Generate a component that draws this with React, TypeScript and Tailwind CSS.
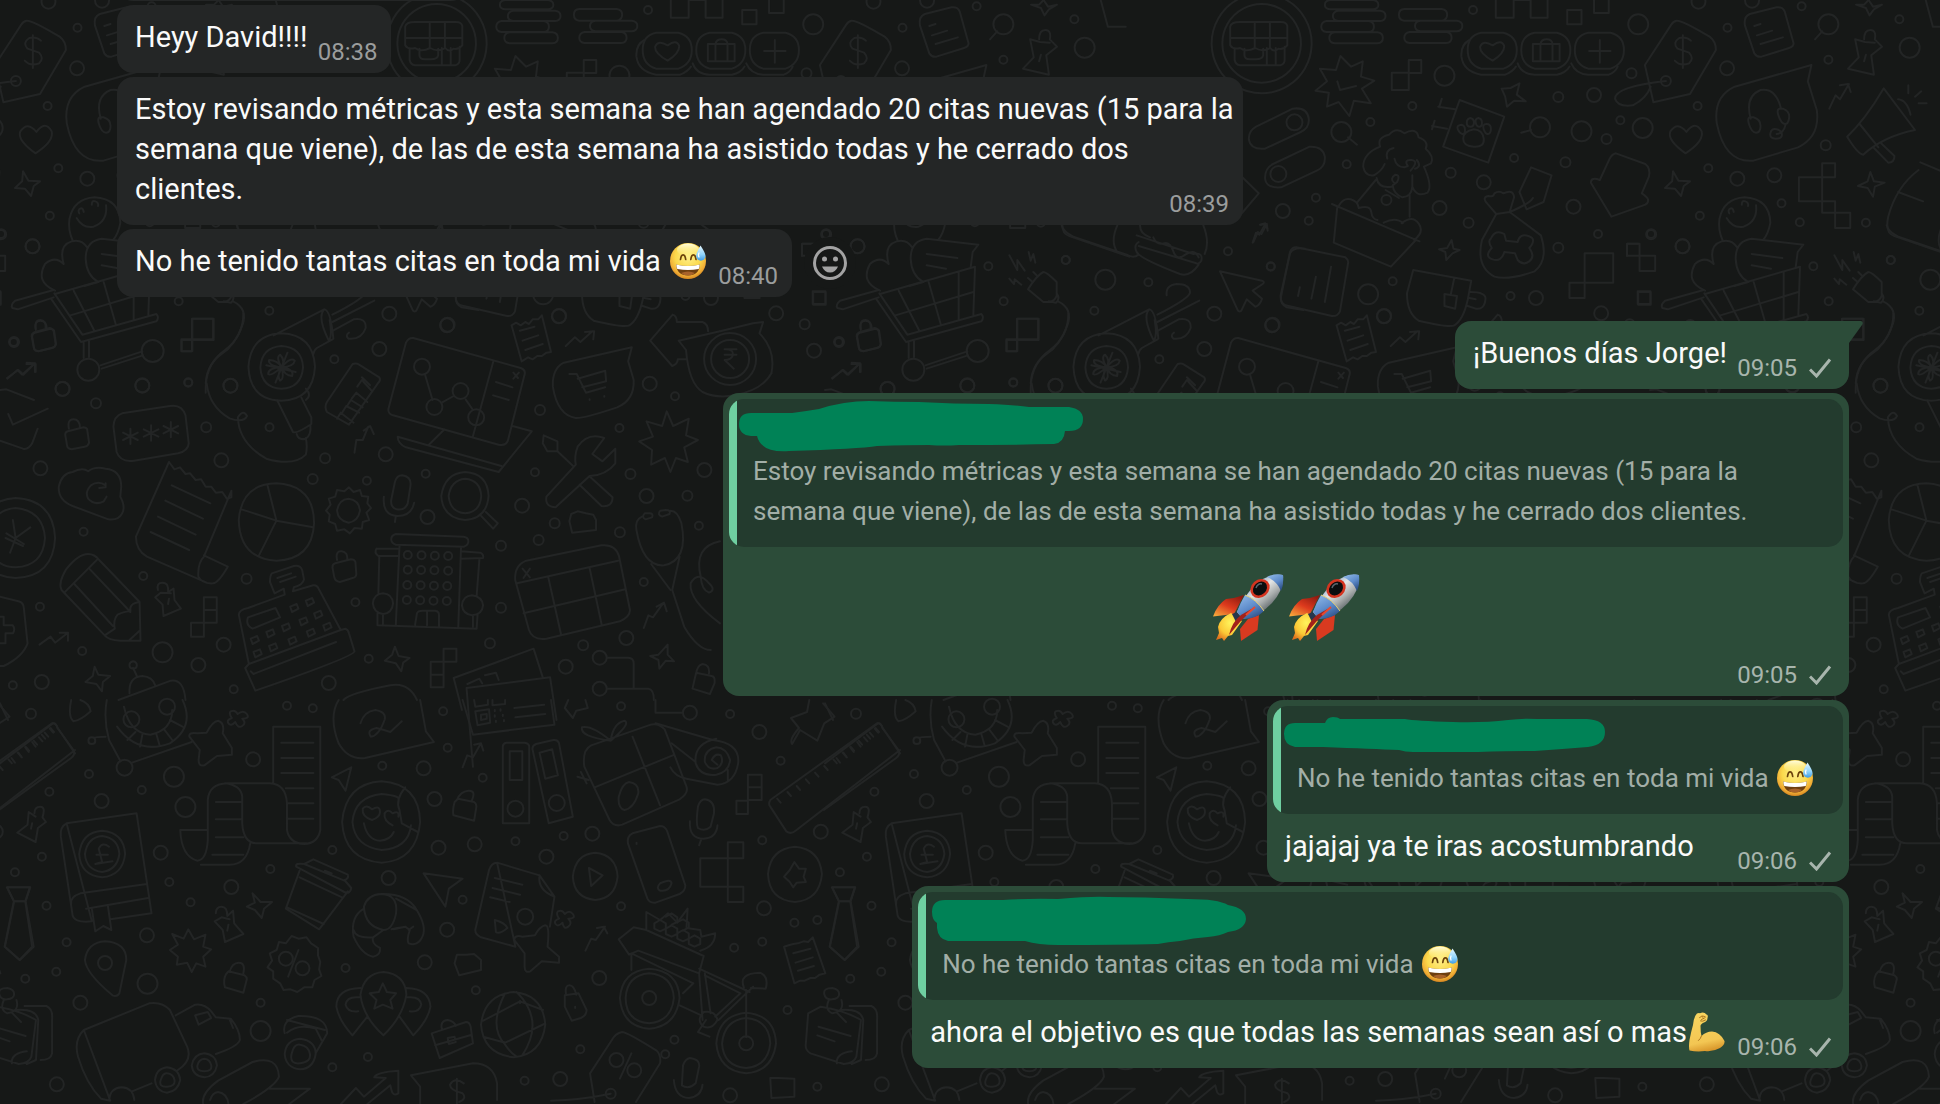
import React from "react";
import clsx from "clsx";

type Dot = [x: number, y: number, size: number];

interface Sheet {
  x: number;
  y: number;
  sx: number;
  sy: number;
  dots: Dot[];
  paths: string[];
}

const TILE_WIDTH = 825;

// The wallpaper tile is drawn in four sheets, each with its own origin and scale.
const SHEETS: Sheet[] = [
  {
    x: 415,
    y: 0,
    sx: 700 / 1568,
    sy: 1 / 3,
    dots: [
      [522, 30, 4], [892, 73, 10], [1092, 83, 4], [1258, 19, 4], [1477, 58, 4], [1500, 143, 10],
      [458, 227, 10], [386, 318, 4], [292, 366, 4], [227, 396, 10], [239, 493, 4], [170, 593, 4],
      [96, 633, 7], [154, 662, 4], [69, 800, 4], [342, 844, 4], [287, 883, 10], [323, 948, 7],
      [73, 974, 7], [472, 518, 5], [546, 547, 7], [614, 474, 4], [729, 487, 5], [447, 624, 7],
      [512, 668, 5], [713, 291, 5], [793, 285, 7], [877, 220, 5], [1091, 205, 7], [1025, 318, 4],
      [672, 382, 10], [765, 394, 10], [821, 417, 5], [852, 361, 4], [902, 384, 10], [1049, 505, 4],
      [1114, 536, 7], [1197, 526, 7], [1213, 610, 4], [1254, 667, 4], [1402, 668, 4], [1030, 647, 4],
      [747, 620, 7], [802, 702, 4], [921, 703, 5], [713, 743, 5], [991, 739, 7], [606, 888, 4],
      [663, 894, 7], [809, 940, 7], [1318, 179, 4], [1318, 73, 10], [1312, 436, 5], [328, 600, 5],
      [122, 367, 8], [86, 522, 8], [954, 243, 5], [1458, 780, 4], [1027, 5, 7], [1147, 2, 7],
    ],
    paths: [
      "M48 -20a112 150 0 1 0 1 0zM48 12a88 118 0 1 0 1 0z",
      "M0 66H92q12 0 14 12v58q-10 14 -20 10q-10 12 -18 -2q-16 14 -34 0q-20 14 -34 0q-16 6 -22 -8V80q2 -14 22 -14zM-22 114H106M33 66V144M67 66V144M-12 146V180q2 14 12 16H90q10 -4 10 -16V140M60 144V194M80 144V194M10 146v20q0 12 12 12h14q14 0 16 -12v-20",
      "M202 0H298q12 2 12 14t-12 14H202q-12 -2 -12 -14t12 -14zM220 32H314q12 2 12 16t-12 15H220q-12 -2 -12 -15t12 -16zM194 63H288q12 2 12 17t-12 16H194q-12 -2 -12 -16t12 -17zM212 97H308q12 2 12 17t-12 16H212q-12 -2 -12 -16t12 -17z",
      "M368 27H452q12 2 12 17t-12 18H368q-12 -2 -12 -18t12 -17zM404 62H486q12 2 12 16t-12 16H404q-12 -2 -12 -16t12 -16zM380 96H462q12 2 12 17t-12 16H380q-12 -2 -12 -16t12 -17z",
      "M573 -8H613V53H573zM651 -8H689V53H651zM613 0H651M733 30H765V73H733zM793 -8H826V39H793z",
      "M540 98H590Q620 108 620 150T590 206H540Q510 194 510 150T540 98zM660 98H710Q740 108 740 150T710 206H660Q630 194 630 150T660 98zM780 98H830Q860 108 860 150T830 206H780Q750 194 750 150T780 98z",
      "M514 120Q494 134 496 170Q500 214 540 224H594Q610 216 618 200M622 190Q630 222 660 224H710Q730 218 738 200M742 190Q752 222 780 224H826Q840 218 846 200",
      "M566 182Q536 160 538 140Q544 118 566 136Q586 116 592 138Q592 160 566 182zM656 132H716V184H656zM673 132V184M700 132V184M673 132q2 -14 14 -14t13 14M806 120V188M782 153H830",
      "M225 168l24 32 26 -16 -4 46 30 12 -28 24 20 44 -38 -8 -10 46 -24 -42 -26 14 4 -42 -30 -6 26 -28 -16 -38 36 4zM218 244l6 26 36 -12",
      "M340 218H378V270H340zM378 180H406V219H378z",
      "M978 62Q990 60 1052 110Q1066 124 1066 150L1008 282L926 307L907 195L966 74Q970 64 978 62zM1010 122Q1000 108 984 114Q968 128 980 146L1006 158Q1018 176 1006 190Q986 200 974 182M992 106V204M954 243Q840 260 840 296Q846 322 880 316Q910 296 920 260",
      "M1142 42L1202 22Q1216 20 1220 34L1240 130Q1240 140 1230 144L1168 170Q1158 172 1152 160L1131 76Q1128 50 1142 42zM1152 78l14 -6M1158 106l34 -14M1166 132l50 -20",
      "M1304 94l-16 24M652 390l-22 8M242 412l20 22",
      "M1408 0l10 20 20 -6 -18 14 -10 18 -8 -22 -22 -10 18 0zM1398 118Q1398 90 1412 90T1422 118L1438 140L1414 166L1420 224L1362 206L1386 172L1378 118L1400 126L1422 128M1402 164l-4 20",
      "M1280 195L1108 260Q1060 290 1068 370Q1086 490 1150 482L1250 442Q1300 410 1292 330L1272 244zM1144 356Q1130 290 1166 270Q1200 262 1212 326M1150 352q16 6 16 26t-10 20t-16 -26t10 -20zM1216 326q16 8 14 28t-10 18t-14 -26t10 -20zM1222 374q-4 26 -20 28M1202 388q12 4 12 16t-14 12t-12 -16t14 -12z",
      "M1320 326l14 -40 10 12 20 -46M1344 256l18 -4 6 24M30 726l10 -30 8 6 12 -30M46 674l14 -2 2 20",
      "M1442 265L1512 390Q1440 410 1396 464Q1384 462 1360 410Q1400 360 1442 265zM1388 372l42 70M1420 444l32 44q14 0 14 -20l-30 -38M1474 298q20 2 28 46M1497 256v24M1526 274l-14 16M1520 310h18",
      "M492 300L592 350L556 488L455 440zM444 320L482 328M430 378L464 386M452 296L446 322M436 362L430 388",
      "M524 388Q544 390 546 416T524 440T500 416T524 388zM516 354q8 2 8 14t-8 12t-8 -12t8 -14zM534 354q8 2 8 14t-6 12t-8 -12t6 -14zM496 374q8 2 8 16t-6 12t-10 -14t8 -14zM552 372q10 0 10 14t-6 16t-10 -14t6 -16z",
      "M626 250l-6 34 20 20 -26 -2 -16 18 -4 -30 -8 -24 20 -2zM970 514l12 28 26 2 -14 14 -6 30 -14 -22 -22 -2 16 -20zM1412 516l8 28 24 4 -22 12 -4 30 -12 -26 -22 -6 22 -14zM474 720l4 26 14 4 -16 10 -14 20 -2 -24 -14 -8 18 -4z",
      "M36 380L118 326Q150 320 154 356Q156 384 136 396L56 446Q24 450 20 420Q18 394 36 380zM74 492L156 440Q186 438 190 470Q192 500 172 512L92 562Q58 566 56 534Q56 504 74 492z",
      "M314 440Q306 412 334 404Q350 380 368 400Q396 380 400 412Q424 424 416 446Q436 470 428 490L412 500Q432 560 420 578Q396 594 386 560V526M386 560Q384 590 364 592Q344 582 342 556L352 546Q360 524 348 524Q334 536 346 550M340 560Q310 566 306 534M314 440Q276 460 276 500Q280 530 300 526Q318 512 324 492M344 444Q324 450 330 476M346 476q4 26 22 26l8 -4q-10 -20 8 -18t-2 32M396 480q12 20 -4 26M304 540L262 608M380 584V650M326 570l30 24",
      "M206 612L402 724M218 620L210 728L338 800L394 720M222 616q10 -24 26 -18t18 26q26 -10 28 12t14 24M322 668q20 -14 34 -6t6 8q24 -26 38 0t-10 50",
      "M126 742L236 772Q244 780 242 790L224 934Q218 950 206 948L102 916Q90 908 92 890L112 756Q116 742 126 742zM204 800L190 906M170 830L160 896M134 862L130 888M-5 518L42 580L-5 654",
      "M388 810L518 842L510 900Q500 960 480 976Q470 984 400 962Q374 940 374 880zM480 834L472 884M458 882L486 888L482 926L458 918zM516 876Q550 876 550 896Q548 930 528 926L510 918M514 894l14 4",
      "M556 614Q540 592 556 588Q568 592 570 580Q580 570 590 580Q612 566 614 592L604 636L574 642zM574 642L542 720Q528 800 570 830Q600 842 660 814Q692 780 674 706L604 636M604 636Q650 610 656 594M652 502L698 526L680 606L642 628L626 576z",
      "M562 716q10 -30 30 -14l4 20 26 4q4 -26 24 -18t2 36q14 26 0 40t-26 -4l-6 -20 -24 -4q-6 30 -26 22t-2 -34q-10 -20 -2 -28z",
      "M842 460L908 492Q920 504 916 530L900 580Q924 600 908 614L832 650L786 548Q786 530 806 540L828 476Q834 462 842 460zM998 460Q956 420 964 394Q980 362 1000 396Q1020 360 1034 394Q1040 424 998 460z",
      "M772 760H836V848H772zM738 848H772V894H738zM892 876H920V914H892zM867 731H895V767H867zM895 767H930V813H895z",
      "M1252 532H1304V604H1252zM1304 490H1333V532H1304zM1304 604H1333V638H1304zM1304 532V604M1333 638H1367V684H1333z",
      "M1130 592Q1186 596 1188 668Q1184 700 1172 720M1082 724Q1070 690 1074 656Q1084 596 1130 592M1096 640q-4 -10 2 -14t8 10M1124 614q0 -14 8 -10t6 14M1090 654Q1104 686 1128 680Q1160 664 1156 616",
      "M1524 487L1600 530M1520 510Q1470 560 1452 650Q1444 700 1466 708L1600 770M1474 576l56 28M1536 0l16 80h40",
    ],
  },
  {
    x: -45,
    y: 222,
    sx: 1 / 3,
    sy: 1 / 3,
    dots: [
      [138, 36, 4], [233, 73, 7], [74, 307, 5], [102, 386, 7], [177, 360, 5], [323, 500, 7],
      [625, 133, 4], [671, 238, 4], [700, 482, 4], [562, 490, 7], [857, 114, 4], [976, 173, 10],
      [943, 266, 4], [1105, 181, 4], [1344, 88, 4], [1472, 133, 4], [1303, 275, 7], [1273, 381, 7],
      [1138, 412, 4], [1476, 310, 7], [826, 491, 7], [593, 387, 11], [400, 443, 11],
    ],
    paths: [
      "M66 102V65H100M98 208H136V246H98z",
      "M326 126Q310 70 350 58Q380 50 396 76M326 126Q300 100 270 126Q240 180 300 206M595 68L440 50Q392 56 392 110Q394 160 430 180L388 192M595 68L578 90L572 136M440 96l92 12M440 130l58 10",
      "M585 134L300 216M585 134L580 278M536 150V294M446 180L482 306M356 206L418 326M346 280L580 210M296 204L180 236Q166 248 172 258L188 262L296 226M288 230L378 360L604 298Q614 286 604 276L382 338L298 214M386 360V408M402 358V406M436 430L562 388M440 440L564 400",
      "M688 100l24 44v-30l22 32M746 90l6 26 8 -20 6 26M688 170l14 16 2 -14 20 16M760 150l12 12M744 168l14 12",
      "M790 150Q800 150 830 180V222Q822 240 806 240H790L744 202Q770 160 790 150zM830 214Q842 230 828 242L806 238M834 238Q880 260 862 310Q840 370 800 396Q750 430 752 512",
      "M712 290H776V354H712zM680 354H712V388H680z",
      "M242 320Q238 294 256 294T272 320M240 330L284 318Q294 320 296 328L302 366Q302 376 292 378L250 388Q238 388 236 376L230 342Q230 334 240 330zM156 468l34 -24 16 14 34 -34M214 426h28v24",
      "M845 10Q850 30 880 44L1040 98Q1060 110 1076 98M1012 10Q990 60 1012 90M1070 40L1240 96Q1270 90 1264 116Q1256 130 1244 122L1076 72M1076 60Q1060 70 1070 90Q1080 110 1200 156Q1230 166 1256 128M1080 10Q1080 36 1110 46M1270 10Q1290 60 1274 96M1120 46q10 24 30 18t30 24t36 10t40 8",
      "M1320 148L1446 176Q1456 180 1448 186L1418 206L1446 230Q1440 250 1426 254L1400 232L1384 266Q1376 272 1372 262zM1418 62l10 -30 10 6 18 -32M1440 8l16 -4 6 16",
      "M1575 80Q1540 74 1530 94L1502 220Q1500 246 1520 256L1570 264",
      "M1160 220Q1156 190 1190 186Q1230 186 1230 212Q1226 230 1132 278M1258 236L1132 300M1134 326L1196 292Q1234 286 1232 318Q1220 354 1180 350Q1170 340 1182 332",
    ],
  },
  {
    x: 0,
    y: 300,
    sx: 720 / 1568,
    sy: 1 / 3,
    dots: [
      [30, 126, 4], [310, 257, 7], [136, 267, 7], [209, 310, 5], [410, 247, 4], [502, 257, 7],
      [587, 382, 4], [449, 382, 5], [482, 481, 7], [708, 475, 5], [681, 537, 5], [799, 542, 4],
      [840, 463, 7], [927, 521, 4], [1176, 330, 5], [1349, 384, 4], [1415, 251, 7], [1470, 289, 4],
      [1165, 517, 4], [1373, 522, 5], [1534, 510, 7], [1408, 588, 7], [1497, 587, 5], [1137, 617, 7],
      [931, 651, 7], [1208, 670, 5], [1173, 720, 5], [1091, 737, 5], [1350, 697, 5], [1522, 677, 4],
      [88, 505, 7], [182, 695, 4], [312, 828, 4], [87, 920, 4], [179, 1053, 4], [354, 1057, 10],
      [432, 1095, 7], [91, 1146, 7], [28, 1156, 4], [487, 1034, 7], [537, 836, 5], [774, 907, 4],
      [803, 1076, 4], [716, 1149, 7], [509, 1168, 4], [1091, 923, 5], [1067, 1030, 5], [1232, 1100, 7],
      [1270, 1036, 5], [1364, 1014, 7], [1402, 846, 4], [919, 200, 8], [946, 321, 8], [1003, 273, 8],
      [1037, 352, 8], [1217, 49, 7], [1306, 1073, 7], [1306, 1166, 7],
      [888, 765, 4], [918, 766, 4], [947, 767, 4], [976, 768, 4],
      [888, 809, 4], [917, 810, 4], [946, 811, 4], [976, 812, 4],
      [887, 855, 4], [916, 856, 4], [945, 857, 4], [974, 858, 4],
      [886, 900, 4], [915, 901, 4], [944, 902, 4], [973, 903, 4],
      [1590, 177, 26], [1590, 177, 19],
    ],
    paths: [
      "M450 250Q456 320 500 355Q530 370 538 348Q530 326 518 352Q520 430 580 476Q640 500 666 464Q670 440 666 414M530 40Q530 110 490 150Q450 190 448 250",
      "M596 106L706 28Q720 30 726 116M706 28Q690 50 716 122Q724 110 718 60M724 118L690 144Q684 150 682 164M613 100Q682 104 686 200Q682 300 613 302Q544 300 541 200Q546 104 613 100zM613 138Q658 142 660 202Q656 264 613 266Q570 264 567 202Q570 142 613 138zM613 202Q600 170 610 164Q622 180 613 202Q632 170 642 182Q640 200 613 202Q642 208 636 228Q620 226 613 202Q620 236 610 242Q602 226 613 202Q590 230 584 222Q584 204 613 202Q582 196 586 180Q604 180 613 202M626 158l-26 90M580 196l64 20",
      "M604 302L638 396Q646 402 678 372V352L656 292M666 266q14 20 0 34M646 402q4 20 20 14q12 -10 10 -42",
      "M768 192Q776 188 782 194L826 232Q830 240 824 248L760 374L712 336Q706 320 712 306zM734 356l8 -18 28 30M746 336l8 -18 28 20M756 318l8 -18 26 22M766 296l10 -18 24 28M778 260l10 -20 20 30M788 232l18 24",
      "M900 114L1134 204Q1146 210 1142 226L1106 422Q1102 438 1086 434L856 346Q844 340 846 326L884 128Q890 112 900 114zM1074 186L1030 408M926 226L942 300M962 308L988 288M1014 298L1030 330M1080 246l36 16M1074 286l34 14M1118 218l10 16M1130 218l-12 18M968 388L934 434M1116 378L1158 394L1086 516L884 442Q866 430 866 410L1092 498",
      "M1114 76l10 -8 10 8 10 -10 8 6 8 -14 12 0 8 -12L1200 156l-10 2 -10 10 -10 0 -10 10 -10 -6 -14 12zM1132 92l32 -12M1138 122l34 -16M1144 150l38 -18M1232 138l20 -26 12 14 26 -32M1274 96l20 -2 -2 24M16 236l22 -26 10 14 28 -34M58 188l18 2 0 26M86 1034l24 -24 10 18 28 -30M130 998l18 0 0 24M772 458l4 -38 14 0 12 -40M792 392l14 -14 8 24M1402 984l10 -38 10 6 22 -42M1430 920l16 -12 6 26",
      "M1376 142L1228 188Q1202 206 1204 260Q1214 346 1254 354Q1270 356 1344 322Q1382 300 1380 240L1368 184zM1240 222h16L1276 278L1318 262M1258 236L1318 212L1320 244L1268 262M1284 298v2M1316 288v2",
      "M1465 44L1416 122L1464 198Q1476 192 1476 178L1496 178M1465 44Q1474 48 1474 66L1530 66Q1542 72 1542 94M1568 94L1478 122L1494 150Q1500 250 1530 276Q1560 296 1600 286Q1660 270 1680 220",
      "M1568 94L1640 70L1662 66L1654 100Q1690 150 1680 220M1578 148H1604M1578 164H1604M1580 148Q1598 148 1596 166Q1592 180 1578 180L1598 206",
      "M1452 334l14 44 34 -22 -6 50 26 14 -30 22 8 44 -26 -12 -12 42 -12 -42 -30 20 2 -44 -28 -26 30 -14 -14 -46 34 14z",
      "M266 340L370 318Q396 312 404 346L411 430Q410 452 388 460L292 482Q262 488 254 456L247 380Q248 348 266 340zM284 386v46M268 398l32 22M300 398l-32 22M329 376v46M313 388l32 22M345 388l-32 22M372 366v46M356 378l32 22M388 378l-32 22",
      "M78 90Q74 62 88 62T102 88M76 98L110 86Q118 88 118 94L122 132Q120 142 112 144L84 154Q74 152 74 142L70 110Q70 100 76 98zM150 386Q146 358 160 358T174 384M148 394L182 382Q190 384 190 390L194 428Q192 438 184 440L156 448Q146 446 146 436L142 404Q142 396 148 394zM734 780Q730 752 744 754T756 780M730 790L764 778Q772 778 774 786L776 822Q776 832 768 834L740 846Q730 844 728 832L724 802Q724 792 730 790zM1516 1122Q1518 1096 1530 1092Q1546 1094 1544 1120M1516 1118L1550 1128Q1558 1130 1556 1150L1546 1182L1508 1166z",
      "M158 516Q180 500 192 514Q206 498 230 506Q264 510 264 560L262 590Q274 620 266 640Q258 662 236 658L158 618Q126 600 128 560Q134 520 158 516zM230 556Q214 540 198 556Q184 576 192 596Q206 618 226 604L232 590M216 564l14 -2 0 -12",
      "M368 486l12 22 12 -6 12 20 10 -2 12 20 12 -2 10 22 12 0 10 18 14 -2 10 20 10 -4 0 -20L444 770Q430 790 432 830Q440 852 464 850Q476 848 496 800L444 766M368 486L296 710Q296 750 320 770L450 848M374 556l84 54M360 602l82 54M344 650l82 54M328 696l84 54",
      "M602 550Q684 556 684 670Q680 778 602 782Q522 776 520 660Q526 552 602 550zM583 558L602 662L682 682M602 662L526 628M602 662L564 766",
      "M760 562l10 14 14 -6 4 18 14 2 -2 20 8 14 -10 14 6 22 -14 6 -2 20 -16 -2 -10 16 -12 -12 -16 4 -4 -20 -14 -8 2 -20 -8 -12 10 -18 -4 -18 14 -6 4 -20 16 4zM759 596Q782 600 784 632Q780 664 759 668Q736 662 734 632Q738 598 759 596z",
      "M876 526Q896 530 894 556L888 610Q882 632 864 628Q850 622 852 600L860 546Q864 526 876 526zM836 590Q832 646 866 648Q896 648 902 608M862 648l-2 18M1013 516Q1062 520 1064 588Q1060 656 1013 660Q964 654 961 588Q968 520 1013 516zM1013 536Q1046 540 1048 588Q1046 636 1013 640Q980 636 977 588Q982 540 1013 536zM1058 636L1084 670L1074 686L1048 648",
      "M34 594Q116 600 120 714Q116 830 34 834Q-40 830 -50 714Q-40 600 34 594zM34 624Q94 632 98 714Q94 798 34 802Q-20 800 -28 714Q-20 630 34 624zM28 660L34 714L66 682M34 714L22 758M14 700L52 732M12 714L50 738",
      "M0 270L14 268L74 300M104 326L28 374L18 342M82 386L70 430Q62 450 50 446L0 422M0 890L40 904Q52 908 52 926L60 1030Q50 1070 8 1098L0 1098M0 950h8v26h20q6 12 0 24h-16v30h-12",
      "M192 762Q206 762 216 780L304 906L306 1022L262 1022Q236 1020 228 1006L134 870Q126 850 144 808Q170 762 192 762zM140 878L212 778M162 852L246 978M196 808L284 936M228 1006L250 986Q246 960 256 944Q280 930 284 936Q280 910 304 906M282 1020l22 -28",
      "M344 870Q340 848 354 848T366 876L378 866L380 900L394 926L356 948L354 914L338 892L350 878L372 880M368 896l-2 16",
      "M444 892H472V968H444zM444 930H472M416 968H444V1010H416zM966 1046H994V1085H966zM938 1085H966V1162H938zM938 1124H966M418 56H464V118H418zM395 118H418V154H395z",
      "M592 820L640 798Q654 794 658 810L662 838Q660 854 640 862L638 874L682 856Q690 854 694 866L742 990L752 986Q758 988 760 1000L772 1054Q770 1070 556 1172L534 1104L542 1092L520 944Q520 930 540 924L620 884L618 866L598 880L588 846Q588 826 592 820zM542 1092L742 990M546 1114l6 8L732 1026M604 834l30 -14M610 846l34 -16M540 952L600 924L610 952L550 986Q534 976 540 952z",
      "M632 920l14 -8 4 14 -14 10zM666 902l14 -8 4 14 -14 10zM546 1016l14 -8 4 14 -14 10zM580 996l14 -8 4 14 -14 10zM614 978l14 -8 4 14 -14 10zM652 960l14 -8 4 14 -14 10zM684 940l14 -8 4 14 -14 10zM552 1056l14 -8 4 14 -14 10zM586 1038l14 -8 4 14 -14 10zM628 1018l14 -8 4 14 -14 10zM668 994l14 -8 4 14 -14 10zM704 976l14 -8 4 14 -14 10z",
      "M862 702L1010 710Q1020 712 1020 724T1010 740L862 734Q852 730 852 718T862 702zM820 746H866M1004 754L1046 758Q1054 764 1052 774L1004 776M820 746Q814 758 824 768H866M870 738L862 974M1004 742L998 982M826 768L824 880M1044 778L1038 888M822 940V976L1038 986L1040 944M834 880Q854 882 856 910Q854 940 834 942Q814 938 812 910Q814 882 834 880zM1028 886Q1050 890 1052 916Q1050 944 1028 946Q1008 942 1006 916Q1008 888 1028 886zM834 942v30M1030 946v34M904 974L908 940Q910 932 920 932H948Q956 934 956 944V978M930 932V976",
      "M1184 406L1214 424V454H1192L1182 430zM1214 454L1248 498M1316 414Q1280 396 1258 440Q1250 470 1254 494L1190 590Q1186 620 1210 622L1284 528Q1320 526 1340 490V446L1312 484L1290 462L1316 414M1262 554L1310 618Q1334 622 1334 592L1286 532",
      "M1244 642L1258 634L1276 640L1292 644L1298 660V690L1246 698L1240 664z",
      "M1146 782L1310 736Q1340 732 1348 768L1372 930Q1372 950 1350 964L1190 1016Q1160 1022 1152 990L1122 840Q1120 796 1146 782zM1126 850L1346 782M1140 940L1362 868M1194 832L1222 1004M1284 804L1310 972M1138 806l16 26M1154 806l-14 28",
      "M1414 640q10 0 6 12l-14 6q-10 -6 -2 -18zM1450 630q12 0 8 12l-16 8q-12 -6 -4 -18zM1398 650Q1382 660 1386 690Q1400 800 1446 796Q1500 780 1484 670Q1476 632 1460 632M1418 792L1460 870M1480 770L1464 870L1490 980Q1520 1050 1548 1050M1568 970Q1500 900 1504 850Q1520 810 1544 850Q1560 870 1544 878Q1528 870 1526 830Q1510 740 1568 724",
      "M206 1100l8 24 26 4 -16 18 -2 28 -12 -22 -24 -6 16 -18zM860 1040l8 28 24 6 -14 14 -4 26 -12 -24 -24 -8 16 -18zM1454 1034v30l14 20 -18 -2 -14 24 -2 -26 -18 -12 18 -4z",
      "M282 1180Q280 1130 310 1128Q332 1130 338 1156M258 1200L372 1142Q400 1136 404 1200M290 1104l8 24M290 1084q8 2 8 12t-8 10t-8 -10t8 -12z",
      "M748 1200Q760 1180 850 1156Q890 1146 908 1200M1006 1230L988 1134L1162 1046L1182 1132M1030 1400L1016 1164L1198 1132L1212 1260M1018 1152l26 -16 6 14M1056 1126l24 -8 6 22M1322 1073H1368Q1380 1074 1380 1090V1164M1322 1166H1412Q1424 1168 1424 1200",
    ],
  },
  {
    x: 0,
    y: 700,
    sx: 900 / 1568,
    sy: 1 / 3,
    dots: [
      [54, 41, 5], [229, 58, 8], [291, 20, 8], [500, 17, 4], [545, 25, 4], [441, 178, 7],
      [155, 222, 4], [217, 203, 8], [303, 230, 10], [247, 270, 4], [177, 303, 7], [86, 275, 4],
      [323, 321, 10], [280, 458, 7], [73, 470, 4], [26, 517, 4], [295, 546, 4], [403, 561, 7],
      [332, 607, 4], [81, 617, 4], [116, 727, 4], [256, 706, 7], [257, 851, 10], [140, 908, 7],
      [98, 815, 4], [44, 836, 4], [99, 1153, 7], [454, 993, 10], [454, 908, 4], [471, 507, 4],
      [579, 450, 4], [677, 534, 7], [602, 804, 4], [740, 787, 7], [779, 689, 7], [806, 599, 4],
      [829, 871, 4], [757, 297, 7], [738, 205, 7], [666, 197, 4], [772, 34, 4], [780, 143, 4],
      [841, 233, 4], [898, 424, 4], [827, 433, 7], [764, 443, 7], [982, 408, 4], [1032, 401, 7],
      [952, 470, 7], [1082, 19, 4], [1202, 38, 7], [1272, 42, 4], [1323, 96, 7], [1360, 182, 4],
      [1328, 421, 4], [1430, 395, 7], [1331, 625, 7], [1384, 668, 4], [1424, 660, 4], [1328, 725, 4],
      [1279, 743, 4], [1082, 619, 4], [1044, 834, 7], [1011, 1048, 4], [976, 1137, 7], [914, 1142, 4],
      [1175, 1019, 4], [1372, 930, 4], [1272, 1186, 7], [1424, 1160, 4], [641, 1071, 4], [579, 1102, 4],
      [183, 789, 7], [498, 776, 7], [527, 805, 7], [915, 650, 8], [1074, 1080, 7], [1105, 1111, 7],
      [1064, 1181, 5], [1159, 1063, 4], [1131, 894, 7], [1300, 1030, 7], [898, 326, 8], [970, 309, 8],
    ],
    paths: [
      "M124 0Q118 50 128 64Q140 62 158 34Q156 10 140 0M0 10L14 60M186 0Q180 60 190 120L210 184M230 188L334 126M204 80Q240 166 296 130Q340 80 318 0M216 20Q226 100 262 104Q300 90 300 30M222 120l14 -24M244 140l4 -36M278 136l-6 -36M300 120l-14 -32M318 80l-22 -20M184 110q-18 0 -20 4M160 112q6 0 6 10t-6 10t-6 -10t6 -10z",
      "M380 62Q392 68 388 100L404 144V164L378 168L356 196Q346 200 346 180L348 150L330 110Q328 96 344 100L360 98Q370 64 380 62zM402 34q8 -6 12 8q10 -14 16 0t-8 14q8 14 0 22t-12 -12q-8 14 -12 4t6 -16q-6 -14 -2 -20z",
      "M92 70Q98 68 100 84L128 150Q132 164 124 174L-2 330M92 70L0 190M88 84l6 12M78 98l6 12M68 112l6 12M56 126l6 14M44 142l6 14M32 158l6 14M20 174l6 14",
      "M476 80H558V390Q554 430 530 432Q504 430 500 390V310Q498 252 470 250H396Q364 252 362 300V420Q360 480 344 482Q316 470 314 390H360M476 80V250M392 250Q420 256 422 290V370Q424 430 448 430H534M436 430Q430 494 400 494H350M490 128H546M490 174H546M490 219H546M498 265H546M500 310H546M500 356H546M376 306H420M376 358H420M376 412H424M370 464H424",
      "M590 0Q572 50 590 130Q606 180 636 174L756 126L742 94L732 0M628 70Q634 34 654 30Q674 36 670 60Q660 108 646 110Q638 90 656 84Q670 90 680 96L700 64M612 202L578 232L590 240L602 272L612 202z",
      "M665 244Q730 252 732 366Q726 482 665 488Q600 480 596 366Q602 250 665 244zM665 282Q700 288 694 300M716 376Q712 444 665 450Q618 440 614 366Q618 290 665 282M706 262Q688 300 696 330L700 370L728 396M648 360Q630 350 632 326Q638 312 648 328Q662 314 662 336Q662 352 648 360zM684 376Q668 362 670 340Q676 324 684 340Q696 330 694 350M634 370Q640 420 662 422Q680 420 686 396",
      "M806 0L824 104L966 74L960 0M826 0l2 20 22 -6 0 -14M858 0v16l22 -4v-12M828 34L852 28L854 68L832 76zM838 44l10 -2 0 14 -10 4zM862 30v4M872 28v4M862 46v4M876 44v4M864 62v4M878 60v4M896 24L948 14M898 52L950 42",
      "M806 202l8 -36 10 6 14 -42M826 134l12 -4 4 22M1020 752l10 -36 8 4 16 -40M1040 684l12 -4 6 20M990 0l-6 24 14 30 6 -22 20 -8 -4 -24",
      "M882 128H914Q922 130 922 140V370H876V140Q876 130 882 128zM888 154H910V240H888zM934 132L964 120Q972 118 974 130L998 350L956 370L928 150Q926 138 934 132zM940 158L962 148L972 226L950 236z",
      "M1030 136L1130 76Q1146 66 1158 88L1196 260Q1200 280 1184 298L1084 374Q1070 382 1062 360L1018 200Q1014 150 1030 136zM1036 262L1172 166M1102 110L1150 316M1064 122Q1010 110 1014 82Q1030 74 1064 122Q1068 70 1088 62Q1100 70 1064 122M1096 246Q1114 250 1112 280Q1104 326 1088 330Q1076 324 1078 290Q1084 250 1096 246z",
      "M1142 70L1242 120Q1290 130 1286 190Q1280 250 1250 254L1196 236Q1176 230 1168 202M1170 130L1212 186M1248 116Q1208 130 1212 190Q1220 230 1248 224Q1270 216 1272 180Q1266 144 1248 142Q1226 150 1228 186Q1234 212 1250 204Q1262 190 1256 166Q1246 158 1240 180L1250 194M1268 210V240M1012 216l10 34M1006 230l20 10",
      "M1303 224H1327V300H1303zM1303 262H1327M1283 302H1303V342H1283zM1142 0V38H1188",
      "M1528 70Q1534 68 1538 84L1568 160M1528 70L1342 300Q1338 312 1342 320L1370 394Q1378 404 1386 392L1568 150M1524 86l6 12M1510 104l6 12M1496 122l6 12M1482 140l6 12M1468 158l6 12M1452 178l6 12M1436 198l6 12M1420 218l6 12M1404 238l6 12M1388 258l6 12M1372 276l6 12M1354 296l6 12",
      "M1434 10L1454 50L1436 70L1424 122L1394 90L1380 132Q1374 120 1392 84L1378 54L1406 36L1410 0",
      "M60 340Q60 320 70 320T74 352L80 366L66 384L62 426L30 398L48 374L50 336L62 350M56 370l-2 16M796 300Q802 274 816 272T822 302M798 296L826 306Q830 310 830 320L826 362L790 346Q788 330 792 306z",
      "M116 370L238 340L264 640L192 658M160 664Q126 670 126 640L106 410Q104 380 116 370zM124 612Q122 590 140 580L256 552M150 626L258 594M160 626L166 694L180 678L194 690L188 618M178 392Q216 398 218 462Q214 526 178 532Q140 526 138 462Q142 396 178 392zM178 408Q206 414 208 462Q204 510 178 516Q150 510 148 462Q152 412 178 408zM190 440Q178 424 172 446L178 486L166 492L196 484M168 464H188",
      "M546 478L606 524Q608 536 600 540L612 564Q610 584 600 576L516 500Q514 488 530 492zM522 512L498 626L556 688L606 574M522 532L596 592M500 622L564 672M530 492l70 50M566 512l12 8",
      "M738 520L806 536L782 566L776 620zM440 580l14 26 20 0 -14 20 -4 28 -12 -24 -14 -10 14 -12zM376 640Q376 620 386 620T396 648L406 632L408 670L424 702L392 726L388 690L374 664L386 652L400 658M398 674l-2 18",
      "M664 582Q694 584 690 640Q684 690 668 690Q636 680 634 620Q640 584 664 582zM664 582Q710 580 726 630Q744 680 736 710Q728 740 712 730Q708 720 714 690L706 680Q690 684 682 688M634 626Q610 650 616 710Q630 764 650 770Q664 766 662 744Q646 730 650 712L668 690M690 596L726 630M616 690Q620 716 650 712M686 688L706 680M712 690L720 680",
      "M866 488L940 526L966 590L958 680M898 740L838 712Q828 704 828 690L852 510Q856 488 866 488zM940 526Q936 570 966 590M862 534l48 20M858 564l48 20M854 592l34 14M862 660Q880 668 884 684Q870 704 864 696zM950 676Q958 676 954 740L974 770V788L944 784L924 814Q914 820 914 800V760L896 720Q896 704 910 710L932 706Q940 680 950 676zM972 634q8 -6 12 8q8 -14 14 0t-8 14q8 14 0 24t-10 -12q-8 14 -12 4t6 -16q-6 -14 -2 -22z",
      "M1037 458Q1074 464 1076 530Q1072 596 1037 600Q1000 594 998 530Q1002 462 1037 458zM1026 504L1050 526L1030 558zM1102 400L1150 378Q1158 378 1162 392L1194 556Q1194 574 1184 582L1142 608Q1132 610 1128 596L1094 430Q1092 408 1102 400zM1109 428v4M1150 550Q1170 534 1170 550Q1166 576 1150 572Q1142 564 1150 550",
      "M1220 475H1268V560H1220zM1268 427H1295V475H1268zM1268 560H1295V606H1268zM1268 475V560M1228 298Q1246 302 1244 340L1238 380Q1228 396 1216 384Q1212 370 1216 320Q1220 298 1228 298zM1202 364Q1200 416 1226 416Q1248 414 1250 376M1222 416l-4 20",
      "M1385 440Q1428 446 1432 522Q1428 600 1385 606Q1340 600 1338 522Q1342 446 1385 440zM1384 486L1392 506H1404L1400 530L1404 546L1388 548L1382 562L1376 546L1366 530L1376 510z",
      "M12 562H52L44 604L56 740L34 780L8 740L24 604zM24 604H44M1450 562H1490L1482 604L1496 740L1472 780L1446 740L1462 604zM1462 604H1482",
      "M183 724Q220 728 220 780L208 880Q204 892 196 886Q150 820 148 780Q152 728 183 724zM328 688l10 30 20 -14 -4 36 14 8 -14 22 4 30 -16 -10 -8 26 -8 -28 -18 6 2 -24 -14 -20 14 -16 -10 -32 20 14zM400 816Q404 788 416 788T424 820M398 814L426 826Q430 830 430 838L424 878L392 862Q388 840 394 822z",
      "M508 708l12 8 14 -4 8 18 12 14v22l4 20 -2 22 4 20 -12 12 -4 22 -14 0 -12 14 -12 -8 -12 2 -6 -20 -12 -14 0 -22 -10 -12 8 -20 -4 -22 12 -10 4 -24 12 4zM520 750L502 830",
      "M668 816Q706 822 708 884Q702 950 668 1006Q632 950 628 884Q634 820 668 816zM667 850L674 876L690 880L680 900L684 926L667 914L652 926L656 900L644 880L660 876zM628 864Q586 866 586 920Q590 960 614 1006L640 950M708 864Q748 866 750 920Q746 960 720 1006L696 950M626 892Q604 888 602 914Q606 938 624 934M710 892Q732 888 734 914Q730 938 714 934",
      "M796 764L812 764L826 762L838 780V810L800 826L792 790zM895 876Q946 884 950 974Q944 1064 895 1072Q842 1062 838 974Q844 884 895 876zM880 880Q850 980 880 1034Q890 1060 900 1070M900 876Q950 960 910 1066M842 962L906 904L946 930M842 1010L880 1028L948 972M906 902v8M878 1026v4M986 880Q984 856 992 856T1004 884M984 886L1008 880L1022 930Q1022 946 1012 954L996 962L984 920zM1002 920v4",
      "M752 1000L812 966Q818 966 820 980L824 1030L766 1074zM758 1036L822 1004M770 988Q766 962 780 960Q792 964 794 978M780 1014l12 -4 2 16 -12 6z",
      "M146 990L260 910Q282 904 296 930L326 1040Q336 1080 310 1110M264 1150L230 1174M192 1202L176 1196Q150 1150 136 1070Q128 1020 146 990zM306 946L340 914Q356 910 368 934L376 952L402 956Q418 990 418 1020Q414 1040 376 1062M340 946L362 936L368 954L346 974zM400 958l6 26M356 1060Q376 1064 378 1096Q374 1130 356 1132Q336 1128 334 1096Q338 1062 356 1060zM291 1102Q312 1106 314 1140Q310 1174 291 1178Q272 1174 270 1140Q272 1106 291 1102zM212 1162Q232 1164 234 1200M190 1200Q192 1164 212 1162M356 1076Q366 1078 368 1096T356 1114T344 1096T356 1076zM291 1120Q302 1122 304 1140T291 1160T280 1140T291 1120z",
      "M354 1212Q350 1180 380 1142L440 1086Q484 1064 486 1130Q480 1160 424 1212M470 1166H540L504 1212M366 1200Q370 1178 380 1176Q396 1180 398 1212M496 1000Q490 960 520 948Q570 946 570 1000L550 1060M500 960L566 990M500 998Q520 970 550 986L560 1020M523 1016Q550 1022 550 1062Q546 1106 523 1108Q498 1104 496 1062Q498 1020 523 1016zM523 1034Q538 1038 540 1062T523 1090T508 1062T523 1034z",
      "M594 1212L620 1164L634 1190L672 1134L652 1132Q656 1116 694 1112V1180Q684 1190 682 1170L680 1156L640 1212M716 1126L824 1090Q860 1090 866 1150V1200M716 1126L732 1160V1212M808 1150Q792 1130 784 1154Q784 1170 806 1180Q814 1196 800 1206M796 1136V1212",
      "M1084 996Q1092 996 1144 1052Q1152 1066 1150 1090L1108 1206M1084 996Q1072 1000 1066 1020L1028 1120L1036 1206M1100 1060L1080 1136M1064 1181Q1010 1200 960 1202M1202 1074Q1220 1078 1218 1100L1212 1150Q1200 1170 1188 1156L1190 1096Q1194 1076 1202 1074zM1174 1140Q1176 1192 1200 1194Q1222 1190 1224 1154M1342 1134H1356L1384 1136V1190L1344 1194z",
      "M1131 806Q1182 812 1184 894Q1178 980 1131 986Q1084 980 1080 894Q1084 812 1131 806zM1131 820Q1172 826 1174 894Q1170 964 1131 970Q1090 964 1090 894Q1092 826 1131 820zM1300 938Q1350 946 1352 1030Q1346 1114 1300 1120Q1252 1112 1248 1030Q1252 946 1300 938zM1300 954Q1340 960 1342 1030Q1338 1098 1300 1104Q1260 1098 1258 1030Q1262 960 1300 954z",
      "M1078 718L1104 682L1126 690L1226 768L1218 820L1112 752L1096 764zM1218 820L1224 960M1228 820L1238 940M1218 806L1306 876M1228 826L1290 880L1246 950M1184 916L1222 946M1312 860L1252 960M1300 870V1012M1296 862Q1286 820 1324 818Q1340 830 1334 866L1308 864M1226 936Q1246 930 1250 960Q1240 990 1226 980Q1212 960 1226 936zM1230 960L1216 996L1236 1010M1100 810V760L1208 850M1208 850L1190 880M1126 690V636L1150 660L1164 640L1180 668L1198 626L1196 684L1220 690L1222 710L1246 700Q1246 740 1220 752",
      "M1140 670l10 -10 10 10v16l-10 8 -10 -8zM1160 686l10 -10 10 10v16l-10 8 -10 -8zM1180 700l10 -10 10 10v16l-10 8 -10 -8zM1160 650l10 -10 10 12v14l-10 8M1200 716l10 -10 10 10v16l-10 8 -10 -8zM1180 666l10 -8 10 10v14l-10 10",
      "M1366 740l8 -4 8 -4 8 -2 10 -6 8 2 8 -14L1438 820l-10 4 -8 10 -8 0 -10 8 -8 0 -10 8zM1382 760l30 -14M1386 788l30 -16M1390 812l28 -14",
      "M1408 940L1430 920Q1470 930 1500 960L1492 1070Q1488 1090 1470 1092L1412 1060Q1402 1050 1404 1030zM1480 918H1518Q1530 926 1528 960V1060Q1526 1080 1508 1080M1466 930Q1500 926 1504 960L1500 1080L1484 1092M1426 980l56 28M1424 1006l30 18M1450 864q12 4 12 18t-12 16t-14 -16t14 -18zM1444 900Q1436 930 1450 940Q1472 934 1466 900M1458 938l16 28M1458 1090Q1456 1060 1484 1054",
    ],
  },
];

function Wallpaper() {
  return (
    <svg aria-hidden="true" className="absolute inset-0 -z-10 h-full w-full">
      <defs>
        <g
          id="tile"
          className="fill-none stroke-[#232525] stroke-2 [stroke-linecap:round] [stroke-linejoin:round] [&_path]:[vector-effect:non-scaling-stroke]"
        >
          {SHEETS.map((sheet) => (
            <g key={`${sheet.x}-${sheet.y}`}>
              <g
                transform={`translate(${sheet.x} ${sheet.y}) scale(${sheet.sx} ${sheet.sy})`}
              >
                {sheet.paths.map((d) => (
                  <path key={d} d={d} />
                ))}
              </g>
              {sheet.dots.map(([x, y, r]) => (
                <circle
                  key={`${x}-${y}-${r}`}
                  cx={sheet.x + x * sheet.sx}
                  cy={sheet.y + y * sheet.sy}
                  r={r}
                />
              ))}
            </g>
          ))}
        </g>
      </defs>
      {[-1, 0, 1, 2].map((n) => (
        <use key={n} href="#tile" x={n * TILE_WIDTH} />
      ))}
    </svg>
  );
}

function SweatSmile() {
  const id = React.useId();
  return (
    <svg
      role="img"
      aria-label="😅"
      viewBox="0 0 40 40"
      className="inline-block size-10 align-top"
    >
      <defs>
        <radialGradient id={`${id}face`} cx="0.5" cy="0.38" r="0.64">
          <stop offset="0" stopColor="#fff08a" />
          <stop offset="0.55" stopColor="#fbd94c" />
          <stop offset="0.82" stopColor="#f0ad35" />
          <stop offset="1" stopColor="#cf7d1c" />
        </radialGradient>
        <linearGradient id={`${id}shine`} x1="0" y1="0" x2="0" y2="1">
          <stop offset="0" stopColor="#fffde0" />
          <stop offset="1" stopColor="#fff38a" stopOpacity="0" />
        </linearGradient>
        <linearGradient id={`${id}drop`} x1="0" y1="0" x2="0" y2="1">
          <stop offset="0" stopColor="#e6f7ff" />
          <stop offset="0.6" stopColor="#8fd3fb" />
          <stop offset="1" stopColor="#3d9be6" />
        </linearGradient>
      </defs>
      <circle cx="20" cy="20" r="18" fill={`url(#${id}face)`} />
      <ellipse cx="20" cy="9" rx="11" ry="6.5" fill={`url(#${id}shine)`} />
      <path
        d="M12.5 18.5q.6-4.6 2.6-4.6t2.6 4.6M22.8 18.5q.6-4.6 2.6-4.6t2.6 4.6"
        fill="none"
        stroke="#6b420c"
        strokeWidth="1.7"
        strokeLinecap="round"
      />
      <path d="M8 23.5q12 3 24 0q-1 11-12 11t-12-11z" fill="#6e3f10" />
      <path d="M8.3 23.5q11.7 3 23.4 0q0 3-1 4.500q-10.700 2-21.400 0q-1-1.500-1-4.500z" fill="#fff" />
      <path d="M13 32q7-3 14 0q-3 2.500-7 2.500t-7-2.500z" fill="#a8622a" />
      <path
        d="M32.500 4.500q5 7.500 5 10.500a4.700 4.700 0 0 1-9.400 0q0-3 4.400-10.500z"
        fill={`url(#${id}drop)`}
      />
      <path d="M31 12q-1 2 0 4" fill="none" stroke="#fff" strokeWidth="1.300" strokeLinecap="round" />
    </svg>
  );
}

function Biceps() {
  const id = React.useId();
  return (
    <svg
      role="img"
      aria-label="💪"
      viewBox="0 0 40 40"
      className="inline-block size-10 align-top"
    >
      <defs>
        <linearGradient id={id} x1="0.3" y1="0" x2="0.5" y2="1">
          <stop offset="0" stopColor="#f8d560" />
          <stop offset="0.75" stopColor="#f3c653" />
          <stop offset="1" stopColor="#d8962a" />
        </linearGradient>
      </defs>
      <path
        d="M8.500 3.500Q10 .500 13 1.200Q17-.500 19.500 2.500Q21.500 3 20.500 6Q20.500 9 17 10.500Q13.500 12 13.500 14Q13.500 20 14.500 24Q19 19.500 25 19.500Q33 20 37.500 29Q38 33 33 36Q26 40 18 39Q10 40 2.500 38.500Q1.500 35 2.500 28Q4 20 6 13Q6.500 7 8.500 3.500z"
        fill={`url(#${id})`}
      />
      <path
        d="M14.500 24Q13.500 27 11.500 28.500M12.500 5.500q2-2 3.500-.500M14.500 7.500l3-1.500M15 4q2 0 3.500 1M13.500 9q2 1 5-1"
        fill="none"
        stroke="#a8741f"
        strokeWidth="1"
        strokeLinecap="round"
      />
    </svg>
  );
}

function Rocket() {
  const id = React.useId();
  return (
    <svg role="img" aria-label="🚀" viewBox="0 0 76 76" className="size-[76px]">
      <defs>
        <linearGradient id={`${id}hull`} x1="0.25" y1="0.2" x2="0.75" y2="0.8">
          <stop offset="0" stopColor="#7f9cc4" />
          <stop offset="0.35" stopColor="#e4e6e6" />
          <stop offset="0.65" stopColor="#a9adad" />
          <stop offset="1" stopColor="#4d565a" />
        </linearGradient>
        <linearGradient id={`${id}blue`} x1="0.2" y1="0" x2="0.8" y2="1">
          <stop offset="0" stopColor="#8db6e6" />
          <stop offset="0.5" stopColor="#5e8ccb" />
          <stop offset="1" stopColor="#28497f" />
        </linearGradient>
        <linearGradient id={`${id}fin`} x1="0.8" y1="0" x2="0.1" y2="1">
          <stop offset="0" stopColor="#8e1a10" />
          <stop offset="0.5" stopColor="#dd3a1d" />
          <stop offset="1" stopColor="#f7a93b" />
        </linearGradient>
        <radialGradient id={`${id}fire`} cx="0.55" cy="0.35" r="0.7">
          <stop offset="0" stopColor="#fff45c" />
          <stop offset="0.6" stopColor="#fbc936" />
          <stop offset="1" stopColor="#e0701d" />
        </radialGradient>
      </defs>
      <path d="M34 26Q26 29 16 30Q7 36 3 47.500L24 45z" fill={`url(#${id}fin)`} />
      <path d="M49 46L47.500 61L31 72L30 60L38 50z" fill="#d93a20" />
      <path
        d="M21 44Q10 49 8 58L9 64L6 71L12 69L14 72L18 67L22 66L32 52z"
        fill={`url(#${id}fire)`}
      />
      <path d="M22 45L27 43L31 49L26 53z" fill="#26364c" />
      <path
        d="M73 6Q60 4 46 15Q36 24 27 43L33 50Q50 47 62 34Q74 21 73 6z"
        fill={`url(#${id}hull)`}
      />
      <path d="M73 6Q65 4 57 8Q67 12 71 22Q74 15 73 6z" fill={`url(#${id}blue)`} />
      <path d="M35 26Q46 30 54 42Q46 50 33 50L27 43Q30 34 35 26z" fill={`url(#${id}blue)`} />
      <path d="M35 26Q46 30 54 42" fill="none" stroke="#e5cf72" strokeWidth="1" />
      <ellipse
        cx="50"
        cy="19.500"
        rx="9"
        ry="7.500"
        transform="rotate(-42 50 19.500)"
        fill="#0b0d0f"
        stroke="#d43420"
        strokeWidth="2.600"
      />
      <path d="M46 19q2-5 6-4" fill="none" stroke="#5a666e" strokeWidth="1.500" />
      <path d="M45 38Q37 46 30 53L19 66Q22 53 31 46z" fill="#a3221a" />
      <path d="M45 38L36 46" stroke="#e84a30" strokeWidth="2" />
    </svg>
  );
}

// Marker strokes that hide the quoted sender's name.
const SCRIBBLES = {
  long: "M22 14H63Q78 12 90 10Q115 2 140 2Q165 3 190 3Q225 5 260 5Q285 6 300 8H340Q354 10 354 20Q354 32 340 32H336Q335 44 325 45Q280 46 230 46Q215 47 200 46Q180 46 148 47Q130 50 60 52Q32 54 28 37H22Q10 36 10 25Q10 14 22 14z",
  medium:
    "M22 17H52Q54 11 60 11Q65 11 67 13Q100 13 132 13Q142 15 180 16Q210 17 235 14Q250 12 264 13H314Q332 14 332 26Q332 39 315 41Q290 43 262 45Q240 45 205 46H140Q132 46 126 44Q100 43 50 41H22Q11 39 11 28Q11 17 22 17z",
  wide: "M27 8H85Q115 6 140 7Q175 4 190 5Q225 5 270 7Q300 7 310 13Q328 16 328 27Q327 38 310 40Q302 44 290 45Q275 46 262 49Q250 50 240 52Q200 53 140 53Q120 53 107 49H30Q20 47 19 36V31Q14 28 14 20Q14 8 27 8z",
};

interface QuoteProps {
  scribble: keyof typeof SCRIBBLES;
  children: React.ReactNode;
}

function Quote({ scribble, children }: QuoteProps) {
  return (
    <blockquote className="relative overflow-hidden rounded-[15px] bg-[#233b2e] pt-3 pr-7 pb-4 pl-6 text-[26px] leading-10 text-[#a2aea7]">
      <span className="absolute inset-y-0 left-0 w-2 bg-[#6fcfa1]" />
      <svg
        aria-hidden="true"
        className="absolute top-0 left-0 h-14 w-[360px] fill-[#008256]"
      >
        <path d={SCRIBBLES[scribble]} />
      </svg>
      <div className="h-10" />
      <p>{children}</p>
    </blockquote>
  );
}

interface BubbleProps {
  time: string;
  outgoing?: boolean;
  tail?: boolean;
  wide?: boolean;
  quote?: React.ReactNode;
  big?: React.ReactNode;
  children?: React.ReactNode;
}

function Bubble({ time, outgoing, tail, wide, quote, big, children }: BubbleProps) {
  return (
    <article
      className={clsx(
        "relative rounded-2xl",
        outgoing ? "bg-[#2c4c39]" : "bg-[#242626]",
        tail && "rounded-tr-none",
        wide ? "w-full max-w-[1126px]" : "w-fit"
      )}
    >
      {tail && (
        <svg
          aria-hidden="true"
          viewBox="0 0 15 22"
          className="absolute top-0 left-full h-[22px] w-[15px] fill-[#2c4c39]"
        >
          <path d="M-1 0H12Q15 1 13 4L0 22H-1z" />
        </svg>
      )}
      {quote && <div className="px-1.5 pt-1.5">{quote}</div>}
      {big ? (
        <div className="flex justify-center pt-[22px] pb-[51px]">{big}</div>
      ) : (
        <p className="pt-3 pr-2 pb-4 pl-[18px] text-[29px] leading-10 text-[#fafafa]">
          {children}
          <span
            className={clsx("inline-block h-px", outgoing ? "w-[114px]" : "w-[76px]")}
          />
        </p>
      )}
      <div
        className={clsx(
          "absolute right-3.5 bottom-1.5 flex items-center gap-3 text-2xl leading-[30px]",
          outgoing ? "text-[#a8b5ad]" : "text-[#9b9d9d]"
        )}
      >
        <time>{time}</time>
        {outgoing && (
          <svg
            role="img"
            aria-label="Enviado"
            viewBox="0 0 26 20"
            className="h-5 w-[26px] fill-none stroke-current"
          >
            <path d="M1 11.500L7.500 18L21 1.500" strokeWidth="3" />
          </svg>
        )}
      </div>
    </article>
  );
}

export default function App() {
  return (
    <main className="relative isolate min-h-screen overflow-hidden bg-[#161817] pr-[91px] pl-[117px] font-[Roboto,sans-serif]">
      <Wallpaper />
      <div className="-mt-[31px] h-8 w-[350px] rounded-b-2xl bg-[#242626]" />

      <section className="mt-1 flex flex-col items-start gap-1">
        <Bubble time="08:38">Heyy David!!!!</Bubble>
        <Bubble time="08:39" wide>
          Estoy revisando métricas y esta semana se han agendado 20 citas nuevas (15
          para la semana que viene), de las de esta semana ha asistido todas y he
          cerrado dos clientes.
        </Bubble>
        <div className="flex items-center gap-3">
          <Bubble time="08:40">
            No he tenido tantas citas en toda mi vida <SweatSmile />
          </Bubble>
          <button
            type="button"
            aria-label="Reaccionar"
            className="flex size-[52px] items-center justify-center rounded-full bg-[#161817]"
          >
            <svg viewBox="0 0 34 34" className="size-[34px] fill-[#a3a3a3]">
              <circle
                cx="17"
                cy="17"
                r="15.500"
                fill="none"
                stroke="#a3a3a3"
                strokeWidth="3"
              />
              <circle cx="11.500" cy="13" r="2.500" />
              <circle cx="22.500" cy="13" r="2.500" />
              <path d="M9 20.500H25Q22.500 26.500 17 26.500T9 20.500z" />
            </svg>
          </button>
        </div>
      </section>

      <section className="mt-6 flex flex-col items-end gap-1 pb-9">
        <Bubble time="09:05" outgoing tail>
          ¡Buenos días Jorge!
        </Bubble>
        <Bubble
          time="09:05"
          outgoing
          wide
          quote={
            <Quote scribble="long">
              Estoy revisando métricas y esta semana se han agendado 20 citas nuevas
              (15 para la semana que viene), de las de esta semana ha asistido todas y
              he cerrado dos clientes.
            </Quote>
          }
          big={
            <>
              <Rocket />
              <Rocket />
            </>
          }
        />
        <Bubble
          time="09:06"
          outgoing
          quote={
            <Quote scribble="medium">
              No he tenido tantas citas en toda mi vida <SweatSmile />
            </Quote>
          }
        >
          jajajaj ya te iras acostumbrando
        </Bubble>
        <Bubble
          time="09:06"
          outgoing
          quote={
            <Quote scribble="wide">
              No he tenido tantas citas en toda mi vida <SweatSmile />
            </Quote>
          }
        >
          ahora el objetivo es que todas las semanas sean así o mas
          <Biceps />
        </Bubble>
      </section>
    </main>
  );
}
